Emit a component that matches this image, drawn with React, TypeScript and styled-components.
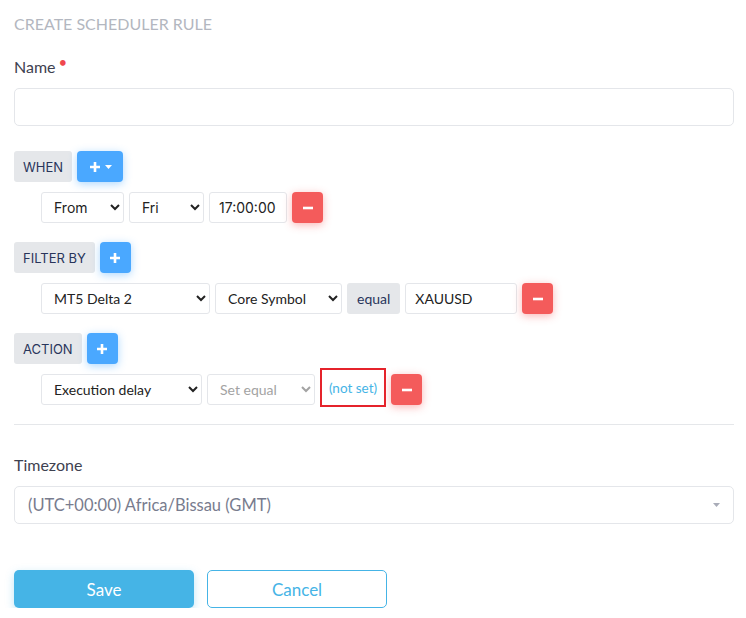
import React from "react";
import styled, { createGlobalStyle, css } from "styled-components";

const GlobalStyle = createGlobalStyle`
  html, body {
    margin: 0;
    padding: 0;
    background: #fff;
  }
  body {
    font-family: Lato, "Noto Sans", sans-serif;
    color: #3b3f4c;
  }
`;

const Page = styled.div`
  width: 746px;
  padding: 14px 12px 0 14px;
  box-sizing: border-box;
`;

const Title = styled.h4`
  margin: 0 0 17px;
  font-size: 16px;
  font-weight: 400;
  color: #b3b7c0;
  line-height: 20px;
`;

const Label = styled.div`
  font-size: 16px;
  line-height: 20px;
  color: #3e4150;
  margin-bottom: 11px;
  sup {
    color: #f0474e;
    font-size: 15px;
    margin-left: 3px;
    position: relative;
    top: 1px;
  }
`;

const TextInput = styled.input`
  display: block;
  width: 100%;
  height: 38px;
  box-sizing: border-box;
  border: 1px solid #e4e6ea;
  border-radius: 5px;
  padding: 0 12px;
  margin-bottom: 25px;
  font: inherit;
  outline: none;
`;

const Group = styled.div`
  display: flex;
  flex-direction: column;
  gap: 10px;
  margin-bottom: 19px;
`;

const Head = styled.div`
  display: flex;
  gap: 5px;
`;

const Tag = styled.span`
  display: inline-flex;
  align-items: center;
  height: 31px;
  padding: 0 9px;
  background: #e5e7ea;
  border-radius: 3px;
  color: #29355b;
  font-family: Inter, "Noto Sans", sans-serif;
  font-size: 13px;
  box-sizing: border-box;
`;

const EqualTag = styled(Tag)`
  font-family: Lato, sans-serif;
  font-size: 14px;
  padding: 0 10px;
`;

const IconButton = styled.button<{ $tone: "add" | "remove"; $w?: number }>`
  display: inline-flex;
  align-items: center;
  justify-content: center;
  gap: 4px;
  width: ${(p) => p.$w ?? 31}px;
  height: 31px;
  border: none;
  border-radius: 4px;
  padding: 0;
  cursor: pointer;
  ${(p) =>
    p.$tone === "add"
      ? css`
          background: #4aa8ff;
          box-shadow: 0 2px 8px rgba(74, 168, 255, 0.45);
        `
      : css`
          background: #f45b5b;
          box-shadow: 0 2px 8px rgba(244, 91, 91, 0.45);
        `}
`;

const Row = styled.div`
  display: flex;
  align-items: center;
  gap: 5px;
  padding-left: 27px;
`;

const Select = styled.select<{ $w: number; $sys?: boolean }>`
  width: ${(p) => p.$w}px;
  height: 31px;
  box-sizing: border-box;
  border: 1px solid #e4e6ea;
  border-radius: 3px;
  background: #fff;
  color: #222;
  padding: 0 8px;
  font-family: ${(p) => (p.$sys ? "Inter, 'Noto Sans', sans-serif" : "Lato, sans-serif")};
  font-size: 14px;
  outline: none;
  &:disabled {
    color: #a3a3a3;
    opacity: 1;
  }
`;

const SmallInput = styled.input<{ $w: number; $sys?: boolean }>`
  width: ${(p) => p.$w}px;
  height: 31px;
  box-sizing: border-box;
  border: 1px solid #e4e6ea;
  border-radius: 3px;
  padding: 0 9px;
  font-family: ${(p) => (p.$sys ? "Inter, 'Noto Sans', sans-serif" : "Lato, sans-serif")};
  font-size: 14px;
  color: #222;
  outline: none;
`;

/* highlighted value link, its frame sticks out above the row */
const NotSet = styled.a`
  display: inline-flex;
  align-items: center;
  justify-content: center;
  width: 66px;
  height: 39px;
  margin: -6px 0 -2px;
  border: 2px solid #e5232b;
  box-sizing: border-box;
  color: #45b4e6;
  font-size: 13.5px;
  text-decoration: none;
`;

const Divider = styled.hr`
  border: none;
  border-top: 1px solid #e5e7ea;
  margin: 0 0 30px;
`;

const TzBox = styled.div`
  display: flex;
  align-items: center;
  justify-content: space-between;
  height: 38px;
  border: 1px solid #e4e6ea;
  border-radius: 5px;
  padding: 0 13px;
  box-sizing: border-box;
  color: #787c8e;
  font-size: 16.5px;
`;

const Actions = styled.div`
  display: flex;
  gap: 13px;
  margin-top: 46px;
`;

const Btn = styled.button<{ $primary?: boolean }>`
  width: 180px;
  height: 38px;
  border-radius: 5px;
  font-family: Lato, sans-serif;
  font-size: 17px;
  cursor: pointer;
  ${(p) =>
    p.$primary
      ? css`
          background: #45b4e6;
          color: #fff;
          border: none;
          box-shadow: 0 3px 8px rgba(69, 180, 230, 0.35);
        `
      : css`
          background: #fff;
          color: #45b4e6;
          border: 1px solid #45b4e6;
        `}
`;

const Plus = () => (
  <svg width="12" height="12" viewBox="0 0 12 12">
    <path d="M6 1v10M1 6h10" stroke="#fff" strokeWidth="2.6" />
  </svg>
);

const Minus = () => (
  <svg width="12" height="12" viewBox="0 0 12 12">
    <path d="M1 6h10" stroke="#fff" strokeWidth="2.6" />
  </svg>
);

const Caret = ({ color = "#fff" }: { color?: string }) => (
  <svg width="7" height="4" viewBox="0 0 7 4">
    <path d="M0 0h7L3.5 4z" fill={color} />
  </svg>
);

export default function App() {
  return (
    <Page>
      <GlobalStyle />
      <Title>CREATE SCHEDULER RULE</Title>
      <Label>
        Name<sup>•</sup>
      </Label>
      <TextInput />

      <Group>
        <Head>
          <Tag>WHEN</Tag>
          <IconButton $tone="add" $w={46}>
            <Plus />
            <Caret />
          </IconButton>
        </Head>
        <Row>
          <Select $w={83} $sys defaultValue="From">
            <option>From</option>
            <option>To</option>
          </Select>
          <Select $w={75} $sys defaultValue="Fri">
            <option>Fri</option>
          </Select>
          <SmallInput $w={78} $sys defaultValue="17:00:00" />
          <IconButton $tone="remove">
            <Minus />
          </IconButton>
        </Row>
      </Group>

      <Group>
        <Head>
          <Tag>FILTER BY</Tag>
          <IconButton $tone="add">
            <Plus />
          </IconButton>
        </Head>
        <Row>
          <Select $w={169} defaultValue="MT5 Delta 2">
            <option>MT5 Delta 2</option>
          </Select>
          <Select $w={127} defaultValue="Core Symbol">
            <option>Core Symbol</option>
          </Select>
          <EqualTag>equal</EqualTag>
          <SmallInput $w={112} defaultValue="XAUUSD" />
          <IconButton $tone="remove">
            <Minus />
          </IconButton>
        </Row>
      </Group>

      <Group>
        <Head>
          <Tag>ACTION</Tag>
          <IconButton $tone="add">
            <Plus />
          </IconButton>
        </Head>
        <Row>
          <Select $w={161} defaultValue="Execution delay">
            <option>Execution delay</option>
          </Select>
          <Select $w={108} disabled defaultValue="Set equal">
            <option>Set equal</option>
          </Select>
          <NotSet href="#">(not set)</NotSet>
          <IconButton $tone="remove">
            <Minus />
          </IconButton>
        </Row>
      </Group>

      <Divider />
      <Label>Timezone</Label>
      <TzBox>
        <span>(UTC+00:00) Africa/Bissau (GMT)</span>
        <Caret color="#a9acb8" />
      </TzBox>
      <Actions>
        <Btn $primary>Save</Btn>
        <Btn>Cancel</Btn>
      </Actions>
    </Page>
  );
}
